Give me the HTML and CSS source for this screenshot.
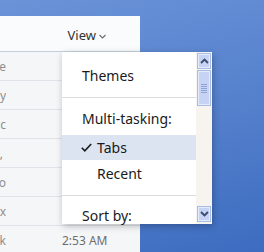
FILE: index.html
```html
<!DOCTYPE html>
<html>
<head>
<meta charset="utf-8">
<link rel="stylesheet" href="styles.css">
</head>
<body>
<div class="desktop">
  <div class="titlebar"></div>
  <div class="window">
    <div class="toolbar">
      <span class="view">View</span>
      <svg class="chev" width="7" height="5" viewBox="0 0 7 5"><polyline points="0.5,1 3.5,4 6.5,1" fill="none" stroke="#6a6a6a" stroke-width="1.1"/></svg>
    </div>
    <div class="row"><div class="name"><span>Theme</span></div><div class="time">3:41 AM</div></div>
    <div class="row"><div class="name"><span>Today</span></div><div class="time">3:28 AM</div></div>
    <div class="row"><div class="name"><span>Music</span></div><div class="time">3:15 AM</div></div>
    <div class="row"><div class="name"><span>Hi,&nbsp;</span></div><div class="time">3:09 AM</div></div>
    <div class="row"><div class="name"><span>Photo</span></div><div class="time">3:02 AM</div></div>
    <div class="row"><div class="name"><span>Inbox</span></div><div class="time">2:58 AM</div></div>
    <div class="row"><div class="name"><span>Work</span></div><div class="time">2:53 AM</div></div>
  </div>
  <div class="menu">
    <div class="items">
      <div class="item top">Themes</div>
      <div class="sep"></div>
      <div class="item label">Multi-tasking:</div>
      <div class="item selected">
        <svg class="check" width="11" height="9" viewBox="0 0 11 9"><polyline points="0.8,4.8 3.8,7.8 10.2,1" fill="none" stroke="#1a1a1a" stroke-width="1.6"/></svg>
        <span>Tabs</span>
      </div>
      <div class="item recent">Recent</div>
      <div class="sep"></div>
      <div class="item sort">Sort by:</div>
    </div>
    <div class="scrollbar">
      <div class="sbtn"><svg width="9" height="6" viewBox="0 0 9 6"><polyline points="1,5 4.5,1.5 8,5" fill="none" stroke="#3c4a6b" stroke-width="1.8"/></svg></div>
      <div class="thumb"><div class="grip"></div><div class="grip"></div><div class="grip"></div><div class="grip"></div><div class="grip"></div></div>
      <div class="track"></div>
      <div class="sbtn"><svg width="9" height="6" viewBox="0 0 9 6"><polyline points="1,1 4.5,4.5 8,1" fill="none" stroke="#3c4a6b" stroke-width="1.8"/></svg></div>
    </div>
  </div>
</div>
</body>
</html>
```
FILE: styles.css
```css
html, body {
  margin: 0;
  padding: 0;
}
body {
  width: 264px;
  height: 252px;
  overflow: hidden;
  font-family: "Noto Sans", "Open Sans", sans-serif;
}
.desktop {
  position: relative;
  width: 264px;
  height: 252px;
  background: linear-gradient(165deg, #6a93d8 0%, #5a85cf 40%, #3d6cc0 100%);
  display: flex;
  flex-direction: column;
}
.titlebar {
  height: 16px;
  flex: none;
}
.window {
  width: 140px;
  flex: 1;
  background: #f5f6f8;
  display: flex;
  flex-direction: column;
}
.toolbar {
  flex: none;
  height: 32px;
  padding-top: 3px;
  background: #fafbfc;
  border-bottom: 1px solid #c5cfdf;
  display: flex;
  align-items: center;
  justify-content: flex-end;
  padding-right: 34px;
}
.view {
  font-size: 13px;
  color: #333;
}
.chev {
  margin-left: 3px;
  margin-top: 2px;
}
.row {
  height: 28px;
  flex: none;
  border-bottom: 1px solid #dfe2e8;
  display: flex;
  align-items: center;
  font-size: 12px;
  color: #8e8e8e;
}
.name {
  width: 6px;
  overflow: hidden;
  display: flex;
  justify-content: flex-end;
  white-space: nowrap;
}
.time {
  margin-left: 56px;
  color: #6e6e6e;
  white-space: nowrap;
}
.menu {
  position: absolute;
  left: 62px;
  top: 52px;
  width: 150px;
  height: 172px;
  display: flex;
  background: #fff;
  box-shadow: 1px 2px 7px rgba(0, 0, 0, 0.26);
}
.items {
  width: 134px;
  display: flex;
  flex-direction: column;
  font-size: 14px;
  color: #1a1a1a;
}
.item {
  display: flex;
  align-items: center;
  padding-left: 20px;
  flex: none;
  box-sizing: border-box;
}
.item.top {
  height: 45px;
  padding-top: 2px;
}
.sep {
  height: 1px;
  flex: none;
  background: #dcdcdc;
}
.item.label {
  height: 37px;
  padding-top: 3px;
}
.item.selected {
  height: 25px;
  background: #dce4f1;
  padding-left: 19px;
}
.check {
  margin-right: 5px;
}
.item.recent {
  height: 35px;
  padding-left: 35px;
  padding-bottom: 9px;
}
.item.sort {
  height: 28px;
  padding-top: 10px;
}
.scrollbar {
  width: 16px;
  background: #f7f4ef;
  display: flex;
  flex-direction: column;
  align-items: center;
  padding-top: 1px;
  padding-bottom: 2px;
  box-sizing: border-box;
}
.sbtn {
  width: 12px;
  height: 14px;
  flex: none;
  background: #c6d3f4;
  border: 1px solid #a9bce6;
  box-shadow: inset 0 0 0 1px #e4ebfb;
  display: flex;
  align-items: center;
  justify-content: center;
}
.thumb {
  width: 12px;
  height: 34px;
  margin-top: 1px;
  flex: none;
  background: #c6d3f4;
  border: 1px solid #a9bce6;
  box-shadow: inset 0 0 0 1px #e4ebfb;
  display: flex;
  flex-direction: column;
  align-items: center;
  justify-content: center;
  gap: 1px;
}
.grip {
  width: 6px;
  height: 1px;
  background: #8fa3d4;
}
.track {
  flex: 1;
}
```
